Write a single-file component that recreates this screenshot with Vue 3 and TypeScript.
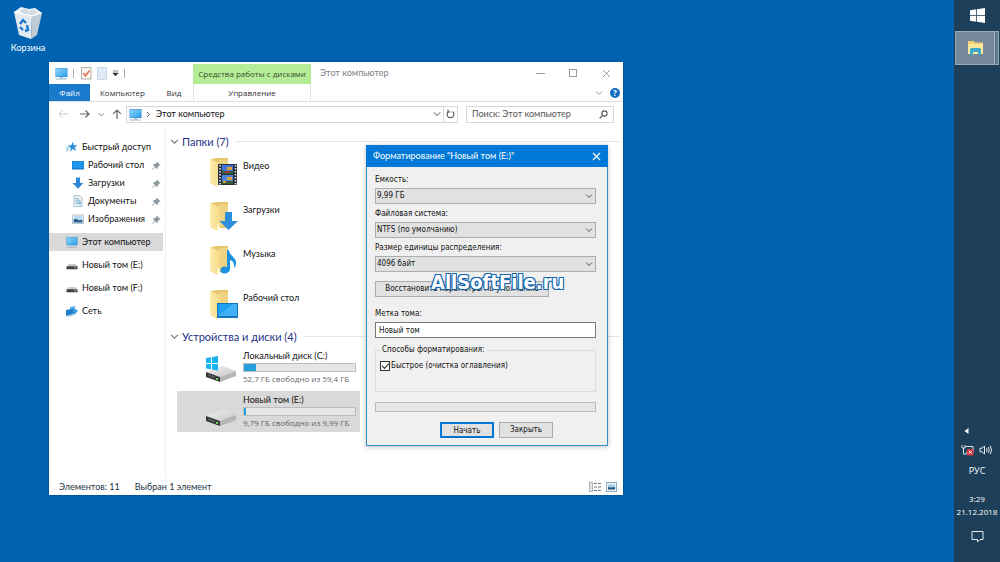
<script setup lang="ts">
import { ref } from 'vue'

interface NavItem {
  icon: string
  label: string
  pinned?: boolean
}

interface Drive {
  icon: string
  name: string
  used: number
  info: string
  selected?: boolean
}

const quickAccess: NavItem[] = [
  { icon: 'desk', label: 'Рабочий стол', pinned: true },
  { icon: 'down', label: 'Загрузки', pinned: true },
  { icon: 'doc', label: 'Документы', pinned: true },
  { icon: 'image', label: 'Изображения', pinned: true },
]

const places: NavItem[] = [
  { icon: 'pc', label: 'Этот компьютер' },
  { icon: 'hdd', label: 'Новый том (E:)' },
  { icon: 'hdd', label: 'Новый том (F:)' },
  { icon: 'net', label: 'Сеть' },
]

const folders: NavItem[] = [
  { icon: 'video', label: 'Видео' },
  { icon: 'downloads', label: 'Загрузки' },
  { icon: 'music', label: 'Музыка' },
  { icon: 'desktop', label: 'Рабочий стол' },
]

const drives: Drive[] = [
  { icon: 'drive-win', name: 'Локальный диск (C:)', used: 11, info: '52,7 ГБ свободно из 59,4 ГБ' },
  { icon: 'drive', name: 'Новый том (E:)', used: 2, info: '9,79 ГБ свободно из 9,99 ГБ', selected: true },
]

const capacity = ref('9,99 ГБ')
const fileSystem = ref('NTFS (по умолчанию)')
const unitSize = ref('4096 байт')
const volumeLabel = ref('Новый том')
const quickFormat = ref(true)
</script>

<template>
  <div class="screen">
    <svg class="sprite" aria-hidden="true">
      <defs>
        <linearGradient id="gScreen" x1="0" y1="0" x2="1" y2="1">
          <stop offset="0" stop-color="#8fd6fb" />
          <stop offset="1" stop-color="#2a9ee8" />
        </linearGradient>
        <linearGradient id="gFolder" x1="0" y1="0" x2="1" y2="0">
          <stop offset="0" stop-color="#fdecae" />
          <stop offset="1" stop-color="#f6da8a" />
        </linearGradient>
        <linearGradient id="gTop" x1="0" y1="0" x2="1" y2="1">
          <stop offset="0" stop-color="#f0f0f0" />
          <stop offset="1" stop-color="#c6c6c6" />
        </linearGradient>
      </defs>

      <symbol id="pc" viewBox="0 0 13 13">
        <rect x="0.5" y="1" width="12" height="9" fill="#2f8fd0" />
        <rect x="1" y="1.5" width="11" height="8" fill="url(#gScreen)" />
        <path d="M1 12h11" stroke="#8fb4cc" />
        <path d="M5 10h3v1.5H5z" fill="#a8c4d6" />
      </symbol>
      <symbol id="star" viewBox="0 0 12 12">
        <path d="M6.8.8l1.1 3.4 3.6-.1-2.7 2.4 1.3 3.6-3.2-2-3 2.4.9-3.6L1.7 4.6l3.600-.3z" fill="#2f93dc" />
        <path d="M0 6.2l3 .5M0 8.2l3-.2M0 10.2l2.5-1" stroke="#6fb7e8" stroke-width=".8" />
      </symbol>
      <symbol id="desk" viewBox="0 0 12 12">
        <rect x="0" y="2" width="12" height="8.5" fill="#1479c9" />
        <rect x=".6" y="2.6" width="10.8" height="6.6" fill="#1e9bf0" />
      </symbol>
      <symbol id="down" viewBox="0 0 12 12">
        <path d="M4 .5h4V6h3.5L6 11.7.5 6H4z" fill="#2d88d8" />
      </symbol>
      <symbol id="doc" viewBox="0 0 12 12">
        <path d="M2 .8h6l2 2v8.700H2z" fill="#f4f9fb" stroke="#8fb0be" stroke-width=".8" />
        <path d="M3.5 3.5h3M3.5 5.2h5M3.5 7h5M3.5 8.8h5" stroke="#5f9fb8" stroke-width=".8" />
        <path d="M6 6.5h3v3H6z" fill="#8cc3d8" />
      </symbol>
      <symbol id="image" viewBox="0 0 12 12">
        <rect x=".5" y="2" width="11" height="8.5" fill="#f4f7fa" stroke="#aeb9c2" stroke-width=".8" />
        <rect x="1.6" y="3" width="8.8" height="6.4" fill="#b7dcf3" />
        <path d="M1.6 9.4V6.6L4 5.8l3 1.4 3.4-.4v2.6z" fill="#2b5f8f" />
      </symbol>
      <symbol id="hdd" viewBox="0 0 12 12">
        <path d="M2.5 5h7L11.5 7.5H.5z" fill="#c9cbcc" />
        <rect x=".5" y="7.2" width="11" height="3" rx=".5" fill="#3c4142" />
        <rect x="8.5" y="8.2" width="1.5" height="1" fill="#b9d8b4" />
      </symbol>
      <symbol id="net" viewBox="0 0 12 12">
        <path d="M4 2l5-1v5l-5 1z" fill="#63b4e8" />
        <path d="M0 5l7-1.5V9L0 11z" fill="#1c7fc9" />
        <path d="M7 3l5 2.5L8.5 10 7 9z" fill="#3a9bdf" />
        <path d="M2 11.3l5-1.2" stroke="#86b8d8" />
      </symbol>
      <symbol id="pin" viewBox="0 0 9 9">
        <path d="M4.800.6L8.400 4.200l-.9.2L6 5.900l-.2 1.600-.8.6L.9 4l.7-.7 1.600-.2 1.500-1.500z" fill="#8f989e" />
        <path d="M2.800 6.200L.4 8.600" stroke="#8f989e" />
      </symbol>

      <symbol id="folder" viewBox="0 0 30 32">
        <path d="M2 2l7-1h10v26H9z" fill="#e8c66c" />
        <path d="M10 3h9v22h-9z" fill="#f0d382" />
        <path d="M1 2l7 3q3 1 3 3v16q-1-1-3-2v8L1 26z" fill="url(#gFolder)" />
        <path d="M8 22q3 1 3 4l-3 4z" fill="#fff3c8" />
      </symbol>
      <symbol id="video" viewBox="0 0 30 32">
        <use href="#folder" />
        <rect x="9" y="7" width="19" height="21" fill="#26303a" />
        <rect x="13" y="8" width="11" height="9" fill="#3f78d8" />
        <rect x="13" y="18" width="11" height="9" fill="#4b86e0" />
        <path d="M13 14h11v3H13zM13 24h11v3H13z" fill="#3c5a35" />
        <path d="M18 10h5v3h-5zM18 20h5v3h-5zM14 24h3v2h-3z" fill="#d9a63c" />
        <path d="M16 14h4v2h-4z" fill="#a8352e" />
        <path d="M11 8v20M26.500 8v20" stroke="#e4e8ea" stroke-width="1.6" stroke-dasharray="1.5 1.5" />
      </symbol>
      <symbol id="downloads" viewBox="0 0 30 32">
        <use href="#folder" />
        <path d="M16 11h7v9h6l-9.500 9-9-9H16z" fill="#2b8fdd" />
      </symbol>
      <symbol id="music" viewBox="0 0 30 32">
        <use href="#folder" />
        <path d="M18 5h2c0 6 8 7 7 14-.3 2-1 3-2 4 .6-5-1-7-4-8v9c0 5-9 6-9.500 2C11 22 15 20.500 18 22z" fill="#1d90e0" />
      </symbol>
      <symbol id="desktop" viewBox="0 0 30 32">
        <use href="#folder" />
        <rect x="8" y="14" width="21" height="15" fill="#1674b8" />
        <rect x="9" y="15" width="19" height="12" fill="#1ea0f2" />
        <path d="M9 27L24 15h4v12z" fill="#3fb0f7" />
      </symbol>
      <symbol id="drive" viewBox="0 0 32 32">
        <path d="M1 19l17-6 13 5-16 6z" fill="url(#gTop)" />
        <path d="M1 19l14 5v5L1 24z" fill="#343838" />
        <path d="M15 24l16-6v5l-16 6z" fill="#b4b6b6" />
        <path d="M3 21l7 2.500v2l-7-2.500z" fill="#565c5c" />
        <rect x="11" y="25" width="2" height="2" fill="#6dd06a" />
      </symbol>
      <symbol id="drive-win" viewBox="0 0 32 32">
        <use href="#drive" />
        <path d="M1 5l5-.8V10H1zM7 4l6-1v7H7zM1 11h5v5.300L1 15.500zM7 11h6v6.400l-6-.9z" fill="#18b4ef" />
      </symbol>
      <symbol id="winlogo" viewBox="0 0 16 16">
        <path d="M0 2.300L6.500 1.400v6.200H0zM7.300 1.300L16 0v7.600H7.300zM0 8.400h6.500v6.200L0 13.700zM7.300 8.400H16V16l-8.700-1.300z" fill="#fff" />
      </symbol>
      <symbol id="chev" viewBox="0 0 8 8">
        <path d="M1 2.500l3 3 3-3" fill="none" stroke="currentColor" />
      </symbol>
    </svg>

    <main class="desktop">
      <button class="shortcut" type="button">
        <svg width="30" height="34" viewBox="0 0 30 34" aria-hidden="true">
          <path d="M1 6L8 1l8 2 6-1 7 5-4 3H5z" fill="#f3f6f8" />
          <path d="M7 4l6-2 3 3 5-2 4 4-6 3H8z" fill="#d3dce2" />
          <path d="M1 6l18 4-1 23L6 29z" fill="#e1eaf0" />
          <path d="M19 10l10-3-5 22-6 4z" fill="#bccbd5" />
          <path d="M1 6l18 4 10-3" fill="none" stroke="#fff" />
          <path d="M7 18l3-4 3 3M14 19l1 5-3 1M10 24l-3-3" fill="none" stroke="#1c78cc" stroke-width="2.400" />
        </svg>
        <span>Корзина</span>
      </button>

      <section class="explorer" aria-label="Этот компьютер">
        <header class="titlebar">
          <div class="quick">
            <svg width="13" height="13"><use href="#pc" /></svg>
            <i class="sep"></i>
            <svg width="11" height="13" viewBox="0 0 11 13">
              <rect x=".5" y=".5" width="9.500" height="11.500" fill="#fbf6f4" stroke="#b5aeaa" />
              <path d="M2.500 6l2 3 4-5.500" fill="none" stroke="#dd6a3f" stroke-width="1.400" />
            </svg>
            <svg width="10" height="13" viewBox="0 0 10 13">
              <path d="M.5.5h9v12h-9z" fill="#dfeaf8" stroke="#cbd8ea" />
            </svg>
            <svg width="7" height="7" viewBox="0 0 7 7">
              <path d="M1 1h5M.8 3h5.400L3.500 6z" fill="#333" stroke="#333" stroke-width=".6" />
            </svg>
            <i class="sep"></i>
          </div>
          <div class="context">Средства работы с дисками</div>
          <h1>Этот компьютер</h1>
          <div class="controls">
            <button type="button" aria-label="Свернуть">
              <svg width="9" height="9" viewBox="0 0 9 9"><path d="M0 4.500h9" stroke="#999" /></svg>
            </button>
            <button type="button" aria-label="Развернуть">
              <svg width="9" height="9" viewBox="0 0 9 9"><rect x=".5" y=".5" width="7" height="7" fill="none" stroke="#999" /></svg>
            </button>
            <button type="button" aria-label="Закрыть окно">
              <svg width="9" height="9" viewBox="0 0 9 9"><path d="M1 1l7 7M8 1L1 8" stroke="#999" /></svg>
            </button>
          </div>
        </header>

        <nav class="ribbon" aria-label="Лента">
          <button class="file" type="button">Файл</button>
          <button class="tab-computer" type="button">Компьютер</button>
          <button class="tab-view" type="button">Вид</button>
          <button class="manage" type="button">Управление</button>
          <span class="ribbon-end">
            <svg class="grey" width="8" height="8"><use href="#chev" /></svg>
            <button class="help" type="button">?</button>
          </span>
        </nav>

        <div class="address">
          <div class="arrows">
            <svg width="10" height="10" viewBox="0 0 10 10"><path d="M10 5H1M4.500 1.500L1 5l3.500 3.500" fill="none" stroke="#c9c9c9" /></svg>
            <svg width="10" height="10" viewBox="0 0 10 10"><path d="M0 5h9M5.500 1.500L9 5 5.500 8.500" fill="none" stroke="#666" stroke-width="1.200" /></svg>
            <svg class="dim" width="7" height="7"><use href="#chev" /></svg>
            <svg width="10" height="10" viewBox="0 0 10 10"><path d="M5 10V1M1.200 4.800L5 1l3.800 3.800" fill="none" stroke="#666" stroke-width="1.200" /></svg>
          </div>
          <div class="path">
            <svg class="path-icon" width="13" height="13"><use href="#pc" /></svg>
            <svg width="5" height="7" viewBox="0 0 5 7"><path d="M1 1l2.500 2.500L1 6" fill="none" stroke="#666" /></svg>
            <span>Этот компьютер</span>
            <svg class="path-chev" width="8" height="8"><use href="#chev" /></svg>
            <button class="refresh" type="button" aria-label="Обновить">
              <svg width="9" height="10" viewBox="0 0 9 10"><path d="M2.500 2.500A3.400 3.400 0 1 0 6.500 2.500M2 .6v2.400h2.600" fill="none" stroke="#555" stroke-width="1.100" /></svg>
            </button>
          </div>
          <label class="search">
            <input type="search" placeholder="Поиск: Этот компьютер" aria-label="Поиск" />
            <svg width="9" height="9" viewBox="0 0 9 9"><circle cx="5.500" cy="3.500" r="2.600" fill="none" stroke="#555" stroke-width="1.100" /><path d="M3.600 5.400L.6 8.400" stroke="#555" stroke-width="1.300" /></svg>
          </label>
        </div>

        <div class="body">
          <aside class="sidebar">
            <div class="nav root">
              <svg width="12" height="12"><use href="#star" /></svg>
              <span>Быстрый доступ</span>
            </div>
            <div v-for="item in quickAccess" :key="item.label" class="nav child">
              <svg width="12" height="12"><use :href="'#' + item.icon" /></svg>
              <span>{{ item.label }}</span>
              <svg v-if="item.pinned" class="pin" width="9" height="9"><use href="#pin" /></svg>
            </div>
            <div v-for="(item, i) in places" :key="item.label" class="nav root place" :class="{ current: i === 0 }">
              <svg width="12" height="12"><use :href="'#' + item.icon" /></svg>
              <span>{{ item.label }}</span>
            </div>
          </aside>

          <div class="content">
            <h2><svg class="dim" width="9" height="9"><use href="#chev" /></svg>Папки (7)</h2>
            <div v-for="folder in folders" :key="folder.label" class="folder">
              <svg width="30" height="32"><use :href="'#' + folder.icon" /></svg>
              <span>{{ folder.label }}</span>
            </div>
            <h2><svg class="dim" width="9" height="9"><use href="#chev" /></svg>Устройства и диски (4)</h2>
            <div class="drives">
              <div v-for="drive in drives" :key="drive.name" class="drive" :class="{ selected: drive.selected }">
                <svg width="32" height="32"><use :href="'#' + drive.icon" /></svg>
                <div class="drive-text">
                  <strong>{{ drive.name }}</strong>
                  <div class="meter"><div :style="{ width: drive.used + '%' }"></div></div>
                  <small>{{ drive.info }}</small>
                </div>
              </div>
            </div>
          </div>
        </div>

        <footer class="status">
          <span>Элементов: 11</span>
          <span>Выбран 1 элемент</span>
          <svg class="views" width="28" height="10" viewBox="0 0 28 10">
            <rect x=".5" y=".5" width="3" height="9" fill="#dde3e8" stroke="#9aa5ad" stroke-width=".8" />
            <path d="M5 1.500h3M9 1.500h3M5 5h3M9 5h3M5 8.500h3M9 8.500h3" stroke="#6f777d" />
            <rect x="17.500" y=".5" width="10" height="9" fill="#e8f2fa" stroke="#8fa9bd" />
            <path d="M19 2.500h7v5h-7z" fill="#a7d2ee" />
            <path d="M19 5l3 .5 4-.5v2.500h-7z" fill="#2a557a" />
          </svg>
        </footer>
      </section>

      <form class="dialog" aria-label="Форматирование" @submit.prevent>
        <header class="dialog-title">
          <span>Форматирование "Новый том (E:)"</span>
          <button type="button" aria-label="Закрыть диалог">
            <svg width="9" height="9" viewBox="0 0 9 9"><path d="M1 1l7 7M8 1L1 8" stroke="#fff" stroke-width="1.200" /></svg>
          </button>
        </header>
        <div class="dialog-body">
          <div class="field">
            <label for="capacity">Емкость:</label>
            <div class="select">
              <select id="capacity" v-model="capacity"><option>9,99 ГБ</option></select>
              <svg width="8" height="8"><use href="#chev" /></svg>
            </div>
          </div>
          <div class="field">
            <label for="fs">Файловая система:</label>
            <div class="select">
              <select id="fs" v-model="fileSystem"><option>NTFS (по умолчанию)</option></select>
              <svg width="8" height="8"><use href="#chev" /></svg>
            </div>
          </div>
          <div class="field">
            <label for="unit">Размер единицы распределения:</label>
            <div class="select">
              <select id="unit" v-model="unitSize"><option>4096 байт</option></select>
              <svg width="8" height="8"><use href="#chev" /></svg>
            </div>
          </div>
          <button class="btn restore" type="button">Восстановить параметры по умолчанию</button>
          <div class="field volume">
            <label for="volume">Метка тома:</label>
            <input id="volume" v-model="volumeLabel" type="text" />
          </div>
          <fieldset>
            <legend>Способы форматирования:</legend>
            <label class="check"><input v-model="quickFormat" type="checkbox" />Быстрое (очистка оглавления)</label>
          </fieldset>
          <div class="progress" role="progressbar" aria-label="Ход форматирования"></div>
          <div class="actions">
            <button class="btn primary" type="submit">Начать</button>
            <button class="btn" type="button">Закрыть</button>
          </div>
        </div>
      </form>

      <div class="watermark">AllSoftFile.ru</div>
    </main>

    <aside class="taskbar" aria-label="Панель задач">
      <button class="start" type="button" aria-label="Пуск">
        <svg width="15" height="15"><use href="#winlogo" /></svg>
      </button>
      <button class="task" type="button" aria-label="Проводник">
        <svg width="17" height="16" viewBox="0 0 17 16">
          <path d="M1 1h6l1 1.500h8V14H1z" fill="#f0d070" />
          <path d="M1 4h15v10H1z" fill="#fbe79c" />
          <path d="M3 15V9.500q0-1.500 1.500-1.500h8Q14 8 14 9.500V15h-3v-3H6v3z" fill="#3fa9c9" />
        </svg>
      </button>
      <div class="tray">
        <svg width="5" height="6" viewBox="0 0 5 6"><path d="M4.500 0v6L0.500 3z" fill="#fff" /></svg>
        <div class="tray-icons">
          <svg width="13" height="12" viewBox="0 0 13 12">
            <path d="M4.500 2.500h7.500v6H5" fill="none" stroke="#dfe6ea" />
            <path d="M1 1v3h3V1M2.500 4v6h4" fill="none" stroke="#dfe6ea" />
            <rect x="6" y="5" width="6.500" height="6.500" rx="1" fill="#d8343a" />
            <path d="M7.800 6.800l3 3M10.800 6.800l-3 3" stroke="#fff" />
          </svg>
          <svg width="14" height="12" viewBox="0 0 14 12">
            <path d="M1 4.200h2L5.500 2v8L3 7.800H1z" fill="none" stroke="#e6ebee" />
            <path d="M7.500 4.200q1 1.800 0 3.600M9.300 3q1.900 3 0 6M11.200 1.800q2.800 4.200 0 8.400" fill="none" stroke="#e6ebee" />
          </svg>
        </div>
        <span class="lang">РУС</span>
        <time>3:29<br />21.12.2018</time>
        <svg class="note" width="13" height="13" viewBox="0 0 13 13">
          <path d="M1 1.500h11v8H9l-2.500 2.500V9.500H1z" fill="none" stroke="#e6ebee" />
        </svg>
      </div>
    </aside>
  </div>
</template>

<style>
body {
  margin: 0;
  background: #0063b1;
}
</style>

<style scoped>
.screen {
  display: flex;
  min-height: 100vh;
  background: #0063b1;
  font: 9px/14px Lato, 'Noto Sans', sans-serif;
  color: #111;
}
.screen *,
.screen *::before {
  box-sizing: border-box;
}
.sprite {
  position: absolute;
  width: 0;
  height: 0;
}
svg {
  display: block;
  flex: none;
}
button,
input,
select {
  font: inherit;
  color: inherit;
  margin: 0;
  padding: 0;
  border: 0;
  border-radius: 0;
  background: none;
}
h1,
h2 {
  margin: 0;
  font-weight: 400;
}
.grey {
  color: #999;
}
.desktop {
  flex: 1;
  position: relative;
}
.shortcut {
  display: flex;
  flex-direction: column;
  align-items: center;
  width: 56px;
  padding-top: 6px;
  gap: 1px;
  color: #fff;
}

/* Explorer window */
.explorer {
  position: absolute;
  left: 49px;
  top: 62px;
  width: 574px;
  min-height: 433px;
  display: flex;
  flex-direction: column;
  background: #fff;
  box-shadow: 0 0 3px rgba(0, 20, 60, 0.4);
}
.titlebar {
  display: flex;
  height: 22px;
}
.quick {
  display: flex;
  align-items: center;
  width: 144px;
  padding-left: 6px;
  gap: 5px;
}
.sep {
  width: 1px;
  height: 9px;
  background: #aaa;
}
.sep + svg {
  margin-left: 2px;
}
.context {
  width: 118px;
  margin-top: 2px;
  background: #b5ec97;
  color: #35502a;
  font: 8px/20px 'Open Sans', 'Noto Sans', sans-serif;
  text-align: center;
  white-space: nowrap;
}
.titlebar h1 {
  flex: 1;
  padding-left: 9px;
  font-size: 9px;
  line-height: 22px;
  color: #808080;
}
.controls {
  display: flex;
}
.controls button {
  display: grid;
  place-items: center;
  width: 33px;
}
.ribbon {
  display: flex;
  height: 18px;
  border-bottom: 1px solid #dedede;
  color: #333;
  font: 8px/14px 'Open Sans', 'Noto Sans', sans-serif;
}
.file {
  width: 41px;
  background: #1979ca;
  color: #fff;
}
.tab-computer {
  width: 65px;
}
.tab-view {
  width: 38px;
}
.manage {
  width: 118px;
  border: solid #e3e3e3;
  border-width: 0 1px;
}
.ribbon-end {
  display: flex;
  align-items: center;
  gap: 7px;
  margin-left: auto;
  padding-right: 3px;
}
.help {
  width: 10px;
  height: 10px;
  border-radius: 50%;
  background: #0f6cbd;
  color: #fff;
  font-weight: 700;
  line-height: 10px;
}
.address {
  display: flex;
  align-items: center;
  height: 24px;
  padding-right: 9px;
}
.arrows {
  display: grid;
  grid-template-columns: 22px 18px 14px 14px;
  align-items: center;
  padding-left: 9px;
}
.path {
  flex: 1;
  display: flex;
  align-items: center;
  height: 17px;
  padding-left: 2px;
  gap: 2px;
  border: 1px solid #d9d9d9;
}
.path-icon {
  margin-right: 2px;
}
.path span {
  margin-left: 3px;
}
.path-chev {
  margin-left: auto;
  color: #444;
}
.refresh {
  display: grid;
  place-items: center;
  width: 14px;
  height: 15px;
  border-left: 1px solid #d9d9d9;
}
.search {
  display: flex;
  align-items: center;
  width: 148px;
  height: 17px;
  margin-left: 8px;
  padding: 0 5px;
  border: 1px solid #d9d9d9;
}
.search input {
  flex: 1;
  min-width: 0;
  outline: 0;
  appearance: none;
}
.search input::placeholder {
  color: #555;
  opacity: 1;
}
.body {
  flex: 1;
  display: flex;
}
.sidebar {
  width: 117px;
  padding: 12px 2px 0 0;
  border-right: 1px solid #f2f2f2;
}
.nav {
  display: flex;
  align-items: center;
  height: 18px;
  gap: 4px;
  white-space: nowrap;
}
.root {
  padding-left: 17px;
}
.child {
  padding-left: 23px;
}
.place {
  margin-top: 5px;
}
.current {
  background: #d9d9d9;
}
.pin {
  margin-left: auto;
  margin-right: 2px;
}
.content {
  flex: 1;
  padding: 6px 3px 0 4px;
}
h2 {
  display: flex;
  align-items: center;
  gap: 3px;
  height: 19px;
  font-size: 11px;
  line-height: 18px;
  color: #1e3287;
}
h2::after {
  content: '';
  flex: 1;
  height: 1px;
  margin-left: 4px;
  background: #e6e6e6;
}
.dim {
  color: #777;
}
.folder {
  display: flex;
  align-items: center;
  height: 44px;
  padding-left: 39px;
  gap: 4px;
}
.folder span {
  align-self: flex-start;
  padding-top: 8px;
}
.drives {
  display: grid;
  gap: 3px;
  padding: 1px 0 0 7px;
}
.drive {
  display: flex;
  width: 183px;
  height: 41px;
  padding: 2px 4px 0 28px;
  gap: 6px;
}
.drive svg {
  margin-top: 4px;
}
.selected {
  background: #d9d9d9;
}
.drive-text {
  flex: 1;
  white-space: nowrap;
}
.drive-text strong,
.drive-text small {
  display: block;
  font-weight: 400;
  font-size: 9px;
}
.drive-text small {
  color: #666;
  font: 8px/14px 'Open Sans', 'Noto Sans', sans-serif;
}
.meter {
  height: 9px;
  border: 1px solid #bcbcbc;
  background: #e6e6e6;
}
.meter div {
  height: 100%;
  background: #26a0da;
}
.status {
  display: flex;
  align-items: center;
  height: 17px;
  padding: 0 6px 0 10px;
  gap: 15px;
  color: #1c3448;
}
.views {
  margin-left: auto;
}

/* Format dialog */
.dialog {
  position: absolute;
  left: 366px;
  top: 145px;
  width: 242px;
  border: 1px solid #2f8fc8;
  background: #f0f0f0;
  box-shadow: 0 1px 5px rgba(0, 0, 0, 0.25);
  font-family: 'DejaVu Sans Condensed', 'DejaVu Sans', sans-serif;
  font-size: 8px;
}
.dialog-title {
  display: flex;
  align-items: center;
  justify-content: space-between;
  height: 22px;
  padding: 0 7px;
  margin: -1px -1px 0;
  background: #0078d7;
  color: #fff;
  font-family: Lato, 'Noto Sans', sans-serif;
  font-size: 9px;
}
.dialog-body {
  padding: 6px 11px 7px 8px;
}
.field {
  display: grid;
  gap: 1px;
  margin-bottom: 3px;
}
.select {
  position: relative;
  height: 16px;
}
.select select {
  width: 100%;
  height: 100%;
  padding: 0 16px 0 1px;
  border: 1px solid #adadad;
  background: #e1e1e1;
  appearance: none;
}
.select svg {
  position: absolute;
  right: 3px;
  top: 4px;
  color: #555;
  pointer-events: none;
}
.btn {
  width: 54px;
  height: 16px;
  border: 1px solid #adadad;
  background: #e1e1e1;
  white-space: nowrap;
}
.restore {
  display: block;
  width: 174px;
  margin: 9px 0 10px;
}
.volume input {
  height: 16px;
  padding: 0 3px;
  border: 1px solid #7a7a7a;
  background: #fff;
}
fieldset {
  position: relative;
  min-width: 0;
  height: 49px;
  margin: 5px 0 10px;
  padding: 2px 4px 0;
  border: 1px solid #dcdcdc;
}
legend {
  padding: 0 2px;
}
.check {
  display: flex;
  align-items: center;
  gap: 1px;
}
.check input {
  display: grid;
  place-items: center;
  width: 10px;
  height: 10px;
  border: 1px solid #333;
  background: #fff;
  appearance: none;
}
.check input:checked::before {
  content: '';
  width: 7px;
  height: 4px;
  border: solid #222;
  border-width: 0 0 1px 1px;
  transform: translateY(-1px) rotate(-45deg);
}
.progress {
  height: 10px;
  border: 1px solid #bcbcbc;
  background: #e6e6e6;
}
.actions {
  display: flex;
  justify-content: flex-end;
  gap: 5px;
  margin-top: 10px;
  padding-right: 43px;
}
.primary {
  border: 2px solid #0078d7;
}
.watermark {
  position: absolute;
  left: 431px;
  top: 270px;
  font: 700 20px/24px 'DejaVu Sans Condensed', 'DejaVu Sans', sans-serif;
  color: #fff;
  text-shadow: -1px -1px #1266ae, 1px -1px #1266ae, -1px 1px #1266ae, 1px 1px #1266ae, 0 -1px #1266ae, 0 1px #1266ae;
}

/* Taskbar */
.taskbar {
  display: flex;
  flex-direction: column;
  width: 46px;
  background: #1d3f59;
  color: #fff;
  font-family: 'Open Sans', 'Noto Sans', sans-serif;
}
.start {
  display: grid;
  place-items: center;
  height: 31px;
}
.task {
  display: grid;
  place-items: center;
  height: 34px;
  margin: 0 1px;
  padding-right: 4px;
  border: 1px solid #9aa9b5;
  background: linear-gradient(90deg, #76899a 0 38px, #a9b6c0 38px 39px, #61788b 39px);
}
.tray {
  display: flex;
  flex-direction: column;
  align-items: center;
  margin-top: auto;
  padding-bottom: 19px;
}
.tray > svg:first-child {
  margin-right: 22px;
}
.tray-icons {
  display: flex;
  gap: 5px;
  margin-top: 10px;
}
.lang {
  margin-top: 8px;
}
time {
  margin-top: 14px;
  font-size: 8px;
  line-height: 13px;
  text-align: center;
}
.note {
  margin-top: 12px;
}
</style>
